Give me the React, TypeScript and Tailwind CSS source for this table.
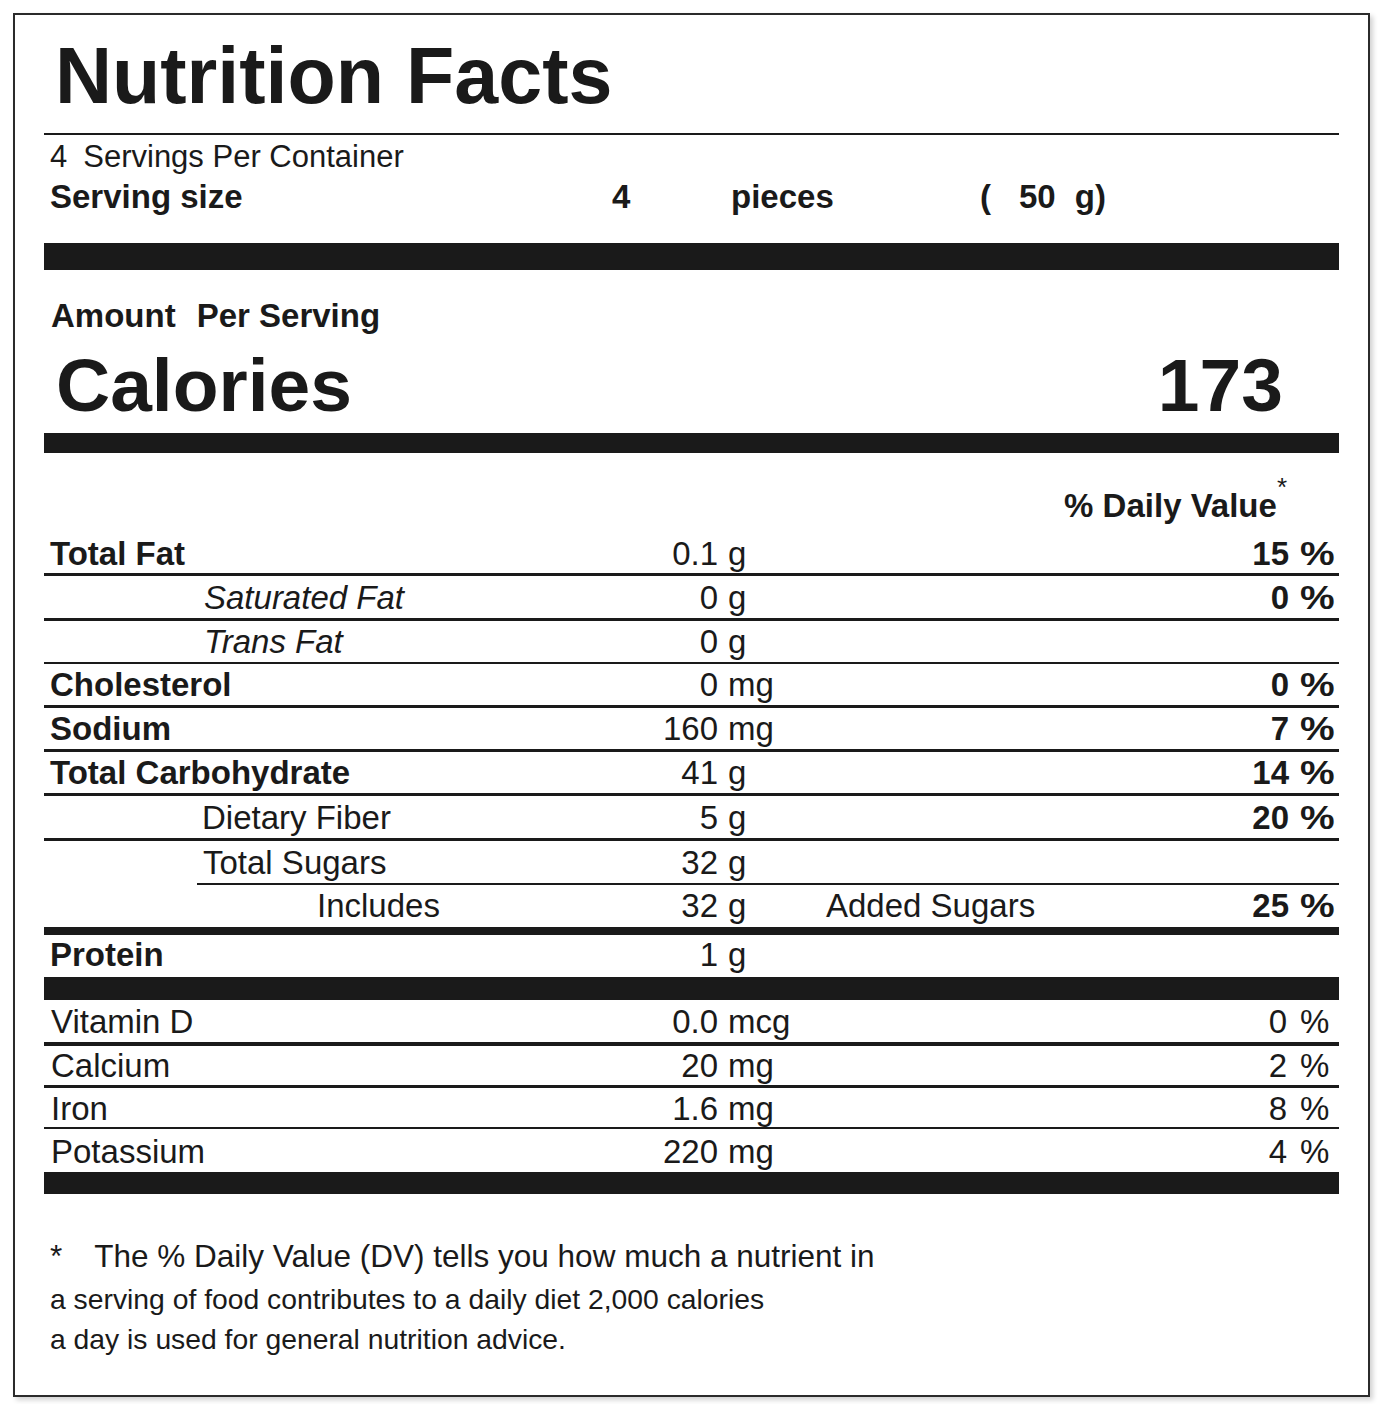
type Row = {
  name: string;
  nameClass: string;
  amount: string;
  unit: string;
  extra?: string;
  pct?: string;
  pctBold?: boolean;
  inset?: boolean;
  rowClass: string;
};

const rows: Row[] = [
  { name: 'Total Fat', nameClass: 'pl-[6px] font-bold', amount: '0.1', unit: 'g', pct: '15', pctBold: true, rowClass: 'h-[46px] border-b-[3px] pb-[3px]' },
  { name: 'Saturated Fat', nameClass: 'pl-[160px] italic', amount: '0', unit: 'g', pct: '0', pctBold: true, rowClass: 'h-[45px] border-b-[3px] pb-[4px]' },
  { name: 'Trans Fat', nameClass: 'pl-[160px] italic', amount: '0', unit: 'g', rowClass: 'h-[43px] border-b-2 pb-[4px]' },
  { name: 'Cholesterol', nameClass: 'pl-[6px] font-bold', amount: '0', unit: 'mg', pct: '0', pctBold: true, rowClass: 'h-[44px] border-b-[3px] pb-[4px]' },
  { name: 'Sodium', nameClass: 'pl-[6px] font-bold', amount: '160', unit: 'mg', pct: '7', pctBold: true, rowClass: 'h-[44px] border-b-[3px] pb-[4px]' },
  { name: 'Total Carbohydrate', nameClass: 'pl-[6px] font-bold', amount: '41', unit: 'g', pct: '14', pctBold: true, rowClass: 'h-[44px] border-b-[3px] pb-[4px]' },
  { name: 'Dietary Fiber', nameClass: 'pl-[158px]', amount: '5', unit: 'g', pct: '20', pctBold: true, rowClass: 'h-[45px] border-b-[3px] pb-[4px]' },
  { name: 'Total Sugars', nameClass: 'pl-[6px]', amount: '32', unit: 'g', inset: true, rowClass: 'ml-[153px] h-[44px] border-b-2 pb-[4px]' },
  { name: 'Includes', nameClass: 'pl-[273px]', amount: '32', unit: 'g', extra: 'Added Sugars', pct: '25', pctBold: true, rowClass: 'h-[50px] border-b-[8px] pb-[5px]' },
  { name: 'Protein', nameClass: 'pl-[6px] font-bold', amount: '1', unit: 'g', rowClass: 'h-[65px] border-b-[23px] pb-[6px]' },
  { name: 'Vitamin D', nameClass: 'pl-[7px]', amount: '0.0', unit: 'mcg', pct: '0', rowClass: 'h-[46px] border-b-[4px] pb-[4px]' },
  { name: 'Calcium', nameClass: 'pl-[7px]', amount: '20', unit: 'mg', pct: '2', rowClass: 'h-[42px] border-b-[3px] pb-[3px]' },
  { name: 'Iron', nameClass: 'pl-[7px]', amount: '1.6', unit: 'mg', pct: '8', rowClass: 'h-[41px] border-b-2 pb-[2px]' },
  { name: 'Potassium', nameClass: 'pl-[7px]', amount: '220', unit: 'mg', pct: '4', rowClass: 'h-[65px] border-b-[22px] pb-[4px]' },
];

function NutrientRow({ row }: { row: Row }) {
  return (
    <div className={`flex items-end border-[#1a1a1a] text-[33px] leading-[33px] ${row.rowClass}`}>
      <div className={`flex shrink-0 items-end justify-between ${row.inset ? 'w-[521px]' : 'w-[674px]'}`}>
        <span className={row.nameClass}>{row.name}</span>
        <span>{row.amount}</span>
      </div>
      <span className="w-[108px] shrink-0 pl-[10px]">{row.unit}</span>
      <span className="flex-1">{row.extra}</span>
      {row.pct && (
        <span className={`flex ${row.pctBold ? 'font-bold' : ''}`}>
          <span className={row.pctBold ? 'mr-[11px]' : 'mr-[13px]'}>{row.pct}</span>
          <span className="w-[39px]">
            <span className={row.pctBold ? 'inline-block origin-left scale-x-[1.18]' : ''}>%</span>
          </span>
        </span>
      )}
    </div>
  );
}

export default function App() {
  return (
    <div className="min-h-screen bg-white pt-[13px] pl-[13px] font-['Liberation_Sans',Arial,sans-serif] text-[#1a1a1a]">
      <div className="h-[1384px] w-[1357px] border-2 border-[#2b2b2b] pl-[29px] pr-[29px] shadow-[3px_3px_5px_rgba(0,0,0,0.18)]">
        {/* title */}
        <div className="h-[120px] border-b-2 border-[#1a1a1a] pt-[21px] pl-[11px]">
          <h1 className="text-[79px] leading-[79px] font-bold">Nutrition Facts</h1>
        </div>

        {/* servings */}
        <div className="h-[108px] pt-[6px]">
          <p className="pl-[6px] text-[31px] leading-[31px]">
            4<span className="ml-[16px]">Servings Per Container</span>
          </p>
          <div className="mt-[8px] flex pl-[6px] text-[33px] leading-[33px] font-bold">
            <span className="w-[562px] shrink-0">Serving size</span>
            <span className="w-[119px] shrink-0">4</span>
            <span className="w-[249px] shrink-0">pieces</span>
            <span>(</span>
            <span className="ml-[28px]">50</span>
            <span className="ml-[19px]">g)</span>
          </div>
        </div>
        <div className="h-[27px] bg-[#1a1a1a]" />

        {/* calories */}
        <div className="h-[183px] border-b-[20px] border-[#1a1a1a] pt-[29px]">
          <p className="pl-[7px] text-[33px] leading-[33px] font-bold">
            Amount<span className="ml-[21px]">Per Serving</span>
          </p>
          <div className="mt-[16px] flex justify-between pr-[56px] pl-[12px] text-[75px] leading-[75px] font-bold">
            <span>Calories</span>
            <span>173</span>
          </div>
        </div>

        {/* daily value header */}
        <div className="flex h-[77px] items-start justify-end pt-[36px] pr-[52px]">
          <span className="text-[33px] leading-[33px] font-bold">% Daily Value</span>
          <span className="-mt-[15px] text-[26px] leading-[26px]">*</span>
        </div>

        {rows.map((r) => (
          <NutrientRow key={r.name} row={r} />
        ))}

        {/* footnote */}
        <div className="pt-[47px] pl-[6px]">
          <p className="text-[31.5px] leading-[31px]">
            *<span className="ml-[32px]">The % Daily Value (DV) tells you how much a nutrient in</span>
          </p>
          <p className="mt-[7px] text-[28.3px] leading-[40px]">
            a serving of food contributes to a daily diet 2,000 calories
          </p>
          <p className="text-[28.3px] leading-[40px]">a day is used for general nutrition advice.</p>
        </div>
      </div>
    </div>
  );
}
